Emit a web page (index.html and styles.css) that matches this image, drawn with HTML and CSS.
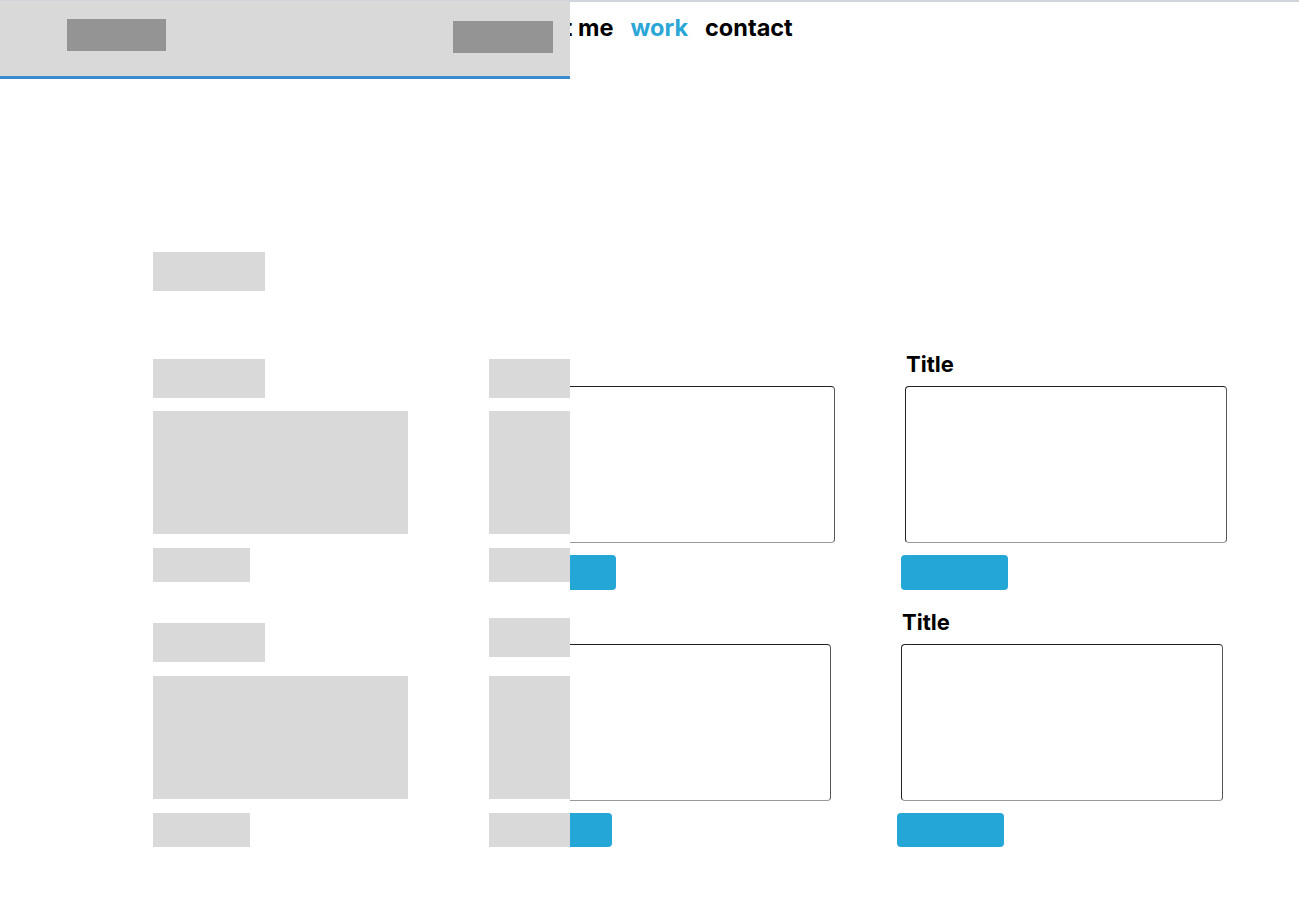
FILE: index.html
```html
<!DOCTYPE html>
<html lang="en">
<head>
    <meta charset="UTF-8">
    <meta name="viewport" content="width=device-width, initial-scale=1.0">
    <title>Work</title>
    <link rel="stylesheet" href="styles.css">
</head>
<body>
    <nav class="topnav">
        <a href="#" class="nav-link">about me</a>
        <a href="#" class="nav-link active">work</a>
        <a href="#" class="nav-link">contact</a>
    </nav>

    <main class="work">
        <div class="work-card">
            <h3 class="work-title">Title</h3>
            <div class="work-preview"></div>
            <button class="work-btn"></button>
        </div>
        <div class="work-card">
            <h3 class="work-title">Title</h3>
            <div class="work-preview"></div>
            <button class="work-btn"></button>
        </div>
        <div class="work-card second">
            <h3 class="work-title">Title</h3>
            <div class="work-preview"></div>
            <button class="work-btn"></button>
        </div>
        <div class="work-card second">
            <h3 class="work-title">Title</h3>
            <div class="work-preview"></div>
            <button class="work-btn"></button>
        </div>
    </main>

    <!-- wireframe overlay laid over the left of the page -->
    <aside class="wireframe">
        <div class="wf-header">
            <div class="wf-logo"></div>
            <div class="wf-menu"></div>
        </div>
        <div class="wf-body">
            <div class="wf-heading"></div>
            <div class="wf-grid">
                <div class="wf-card">
                    <div class="wf-title"></div>
                    <div class="wf-image"></div>
                    <div class="wf-btn"></div>
                </div>
                <div class="wf-card">
                    <div class="wf-title"></div>
                    <div class="wf-image"></div>
                    <div class="wf-btn"></div>
                </div>
                <div class="wf-card">
                    <div class="wf-title"></div>
                    <div class="wf-image"></div>
                    <div class="wf-btn"></div>
                </div>
                <div class="wf-card raised">
                    <div class="wf-title"></div>
                    <div class="wf-image"></div>
                    <div class="wf-btn"></div>
                </div>
            </div>
        </div>
    </aside>
</body>
</html>
```

FILE: styles.css
```css
body{
    margin: 0;
    background-color: #fff;
    border-top: 2px solid #d0d4db;
    font-family: Inter, "Liberation Sans", sans-serif;
    color: #000;
    height: 913px;
    overflow: hidden;
}
.topnav{
    display: flex;
    justify-content: center;
    gap: 17px;
    padding: 11px 0;
}
.nav-link{
    font-size: 23.5px;
    font-weight: 700;
    color: #000;
    text-decoration: none;
}
.nav-link.active{
    color: #2ba6d6;
}
.work{
    display: grid;
    grid-template-columns: 322px 322px;
    column-gap: 70px;
    row-gap: 19px;
    padding-top: 298px;
    padding-left: 513px;
}
.work-card{
    width: 322px;
}
.work-card.second{
    margin-left: -4px;
}
.work-title{
    margin: 0 0 9px 1px;
    font-size: 22px;
    line-height: 26px;
    font-weight: 700;
}
.work-preview{
    height: 155px;
    border: 1px solid #222;
    border-right-color: #555;
    border-bottom-color: #999;
    border-radius: 4px;
}
.work-btn{
    display: block;
    width: 107px;
    height: 35px;
    margin-top: 12px;
    margin-left: -4px;
    background-color: #24a6d7;
    border: none;
    border-radius: 4px;
    cursor: pointer;
}
.work-card.second .work-btn{
    height: 34px;
}

/* wireframe */
.wireframe{
    position: absolute;
    top: 1px;
    left: 0;
    width: 570px;
    height: 914px;
    background-color: #fff;
    overflow: hidden;
}
.wf-header{
    display: flex;
    justify-content: space-between;
    align-items: flex-start;
    height: 78px;
    padding: 18px 17px 0 67px;
    box-sizing: border-box;
    background-color: #d9d9d9;
    border-bottom: 3px solid #3a8ccf;
}
.wf-logo{
    width: 99px;
    height: 32px;
    background-color: #949494;
}
.wf-menu{
    width: 100px;
    height: 32px;
    margin-top: 2px;
    background-color: #949494;
}
.wf-body{
    padding: 173px 0 0 153px;
}
.wf-heading{
    width: 112px;
    height: 39px;
    background-color: #d9d9d9;
    margin-bottom: 68px;
}
.wf-grid{
    display: grid;
    grid-template-columns: 255px 255px;
    column-gap: 81px;
    row-gap: 41px;
}
.wf-title{
    width: 112px;
    height: 39px;
    margin-bottom: 13px;
    background-color: #d9d9d9;
}
.wf-image{
    height: 123px;
    margin-bottom: 14px;
    background-color: #d9d9d9;
}
.wf-btn{
    width: 97px;
    height: 34px;
    background-color: #d9d9d9;
}
.wf-card.raised{
    margin-top: -5px;
}
.wf-card.raised .wf-title{
    margin-bottom: 19px;
}
.wf-grid .wf-card:nth-child(3) .wf-title{
    margin-bottom: 14px;
}
```
